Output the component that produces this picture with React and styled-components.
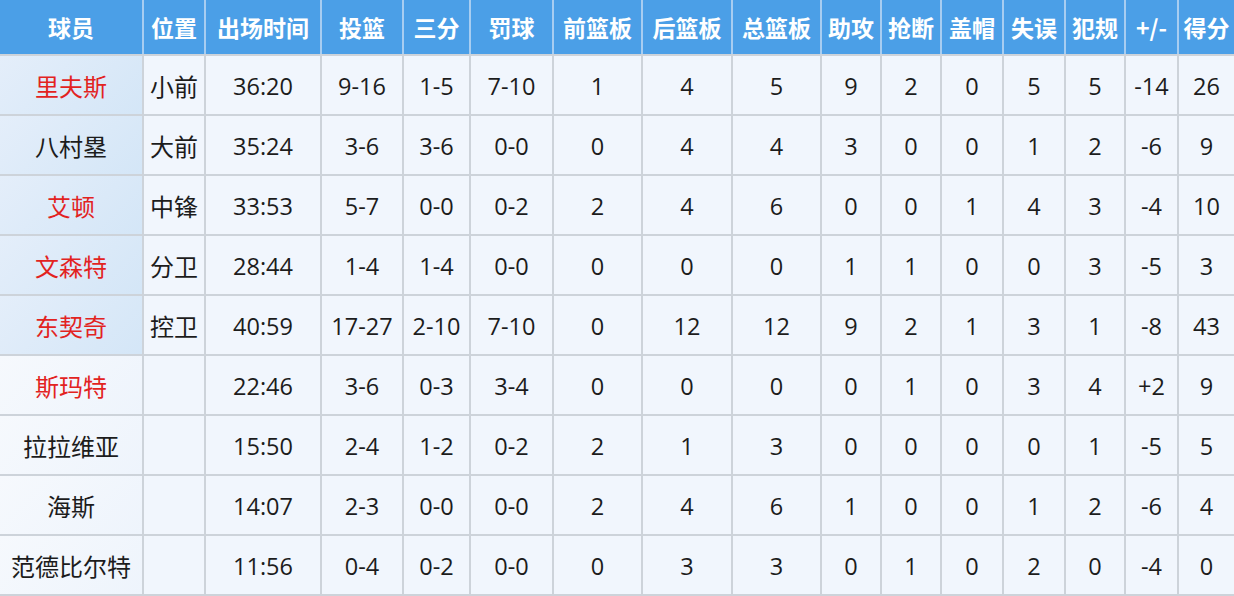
import React from "react";
import styled, { createGlobalStyle } from "styled-components";

const GlobalStyle = createGlobalStyle`
  html, body {
    margin: 0;
    padding: 0;
    background: #ffffff;
  }
  body {
    font-family: "Open Sans", "Noto Sans CJK SC", sans-serif;
  }
`;

const COLUMNS = "142px 60px 114px 80px 65px 81px 87px 88px 87px 58px 58px 60px 60px 58px 51px 55px";

const Table = styled.div`
  width: 1234px;
  display: flex;
  flex-direction: column;
  gap: 2px;
  padding-bottom: 2px;
  background: #cdd3da;
`;

const HeaderRow = styled.div`
  display: grid;
  grid-template-columns: ${COLUMNS};
  column-gap: 2px;
  height: 54px;
  background: #a7cdf1;
`;

const HeadCell = styled.div`
  display: flex;
  align-items: center;
  justify-content: center;
  background: #4b9fe7;
  color: #ffffff;
  font-family: "Noto Sans CJK SC", "Open Sans", sans-serif;
  font-weight: 700;
  font-size: 23px;
  white-space: nowrap;
  overflow: hidden;
`;

const Row = styled.div`
  display: grid;
  grid-template-columns: ${COLUMNS};
  column-gap: 2px;
  height: 58px;
`;

const Cell = styled.div`
  display: flex;
  align-items: center;
  justify-content: center;
  padding-top: 1px;
  background: #f1f6fd;
  color: #1c1c1c;
  font-size: 23.5px;
  white-space: nowrap;
`;

const NameCell = styled(Cell)`
  font-family: "Noto Sans CJK SC", sans-serif;
  font-size: 24px;
  color: ${(p) => (p.$red ? "#e2231f" : "#1c1c1c")};
  background: ${(p) =>
    p.$starter
      ? "linear-gradient(135deg, #e4eefa 0%, #d4e6f7 100%)"
      : "linear-gradient(135deg, #f6f9fd 0%, #eef4fc 100%)"};
`;

const PosCell = styled(Cell)`
  font-family: "Noto Sans CJK SC", sans-serif;
  font-size: 24px;
`;

const headers = [
  "球员", "位置", "出场时间", "投篮", "三分", "罚球", "前篮板", "后篮板",
  "总篮板", "助攻", "抢断", "盖帽", "失误", "犯规", "+/-", "得分",
];

const players = [
  { name: "里夫斯", red: true, pos: "小前", stats: ["36:20", "9-16", "1-5", "7-10", 1, 4, 5, 9, 2, 0, 5, 5, "-14", 26] },
  { name: "八村塁", red: false, pos: "大前", stats: ["35:24", "3-6", "3-6", "0-0", 0, 4, 4, 3, 0, 0, 1, 2, "-6", 9] },
  { name: "艾顿", red: true, pos: "中锋", stats: ["33:53", "5-7", "0-0", "0-2", 2, 4, 6, 0, 0, 1, 4, 3, "-4", 10] },
  { name: "文森特", red: true, pos: "分卫", stats: ["28:44", "1-4", "1-4", "0-0", 0, 0, 0, 1, 1, 0, 0, 3, "-5", 3] },
  { name: "东契奇", red: true, pos: "控卫", stats: ["40:59", "17-27", "2-10", "7-10", 0, 12, 12, 9, 2, 1, 3, 1, "-8", 43] },
  { name: "斯玛特", red: true, pos: "", stats: ["22:46", "3-6", "0-3", "3-4", 0, 0, 0, 0, 1, 0, 3, 4, "+2", 9] },
  { name: "拉拉维亚", red: false, pos: "", stats: ["15:50", "2-4", "1-2", "0-2", 2, 1, 3, 0, 0, 0, 0, 1, "-5", 5] },
  { name: "海斯", red: false, pos: "", stats: ["14:07", "2-3", "0-0", "0-0", 2, 4, 6, 1, 0, 0, 1, 2, "-6", 4] },
  { name: "范德比尔特", red: false, pos: "", stats: ["11:56", "0-4", "0-2", "0-0", 0, 3, 3, 0, 1, 0, 2, 0, "-4", 0] },
];

export default function App() {
  return (
    <>
      <GlobalStyle />
      <Table>
        <HeaderRow>
          {headers.map((h) => (
            <HeadCell key={h}>{h}</HeadCell>
          ))}
        </HeaderRow>
        {players.map((p, i) => (
          <Row key={p.name}>
            <NameCell $red={p.red} $starter={i < 5}>
              {p.name}
            </NameCell>
            <PosCell>{p.pos}</PosCell>
            {p.stats.map((s, j) => (
              <Cell key={j}>{s}</Cell>
            ))}
          </Row>
        ))}
      </Table>
    </>
  );
}
